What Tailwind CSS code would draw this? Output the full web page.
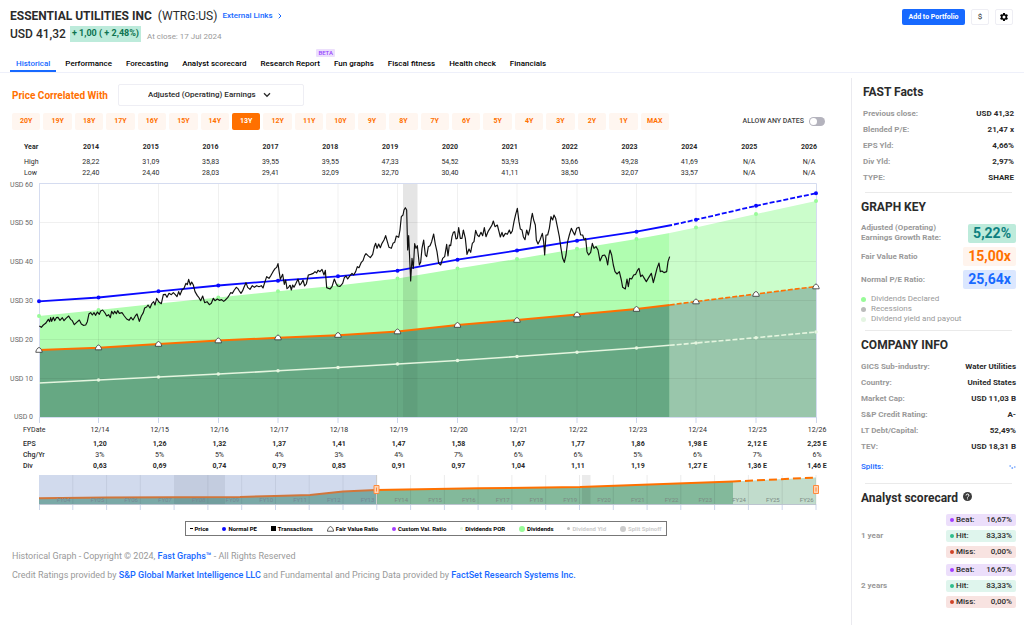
<!DOCTYPE html>
<html lang="en">
<head>
<meta charset="utf-8">
<title>Essential Utilities Inc – Historical Graph</title>
<script src="https://cdn.jsdelivr.net/npm/@tailwindcss/browser@4"></script>
</head>
<body class="bg-white font-[Roboto,sans-serif] text-[#2b2b2b] overflow-x-hidden">
<header class="border-b border-[#eef0fa]">
  <div class="flex items-start justify-between pl-[10px] pr-[11px] pt-[8px]">
    <div>
      <div class="flex h-4 items-center">
        <h1 class="flex items-center gap-[6px] text-[12px] font-bold whitespace-nowrap">ESSENTIAL UTILITIES INC <span class="font-normal">(WTRG:US)</span></h1>
        <a href="#" class="ml-[5px] flex items-center gap-[5px] text-[8px] font-medium text-[#1769ff]">External Links
          <svg class="h-[6px] w-[4px]" viewBox="0 0 4 6" fill="none" stroke="currentColor"><path d="M.7 .7 3 3 .7 5.3"/></svg></a>
      </div>
      <div class="mt-[1px] flex h-[18px] items-center">
        <span class="text-[12px] font-medium">USD 41,32</span>
        <span class="ml-[4px] flex h-4 items-center bg-[#bdebdb] px-[2px] text-[9px] font-bold text-[#0d7350]">+ 1,00 ( + 2,48%)</span>
        <span class="ml-[6px] pt-[6px] text-[8px] text-[#999]">At close: 17 Jul 2024</span>
      </div>
    </div>
    <div class="flex gap-[6px] pt-[1px]">
      <button class="h-4 w-[63px] rounded-[2px] bg-[#1769ff] text-[7px] font-bold text-white">Add to Portfolio</button>
      <button class="h-4 w-[18px] rounded-[2px] border border-[#eeeef4] text-[8px]">$</button>
      <button aria-label="Settings" class="flex h-4 w-[18px] items-center justify-center rounded-[2px] border border-[#eeeef4] text-black">
        <svg class="size-[10px]" viewBox="0 0 24 24" fill="currentColor"><path d="M19.14 12.94c.04-.3.06-.61.06-.94s-.02-.64-.07-.94l2.03-1.58a.49.49 0 0 0 .12-.61l-1.92-3.32a.49.49 0 0 0-.59-.22l-2.39.96a7 7 0 0 0-1.62-.94l-.36-2.54a.48.48 0 0 0-.48-.41h-3.84a.48.48 0 0 0-.47.41l-.36 2.54c-.59.24-1.13.57-1.62.94l-2.39-.96a.48.48 0 0 0-.59.22L2.74 8.87a.48.48 0 0 0 .12.61l2.03 1.58c-.05.3-.09.63-.09.94s.02.64.07.94l-2.03 1.58a.49.49 0 0 0-.12.61l1.92 3.32c.12.22.37.29.59.22l2.39-.96c.5.38 1.03.7 1.62.94l.36 2.54c.05.24.24.41.48.41h3.84c.24 0 .44-.17.47-.41l.36-2.54c.59-.24 1.13-.56 1.62-.94l2.39.96c.22.08.47 0 .59-.22l1.92-3.32a.48.48 0 0 0-.12-.61zM12 15.6A3.6 3.6 0 1 1 12 8.400a3.600 3.600 0 0 1 0 7.200z"/></svg>
      </button>
    </div>
  </div>
  <nav class="mt-[12px] flex h-[17px] gap-[14px] pl-[10px] text-[8px] font-medium text-black">
    <a href="#" class="-mr-[5px] border-b-2 border-[#1769ff] px-[6px] pt-[3px] text-[#1769ff]">Historical</a>
    <a href="#" class="pt-[3px]">Performance</a>
    <a href="#" class="pt-[3px]">Forecasting</a>
    <a href="#" class="pt-[3px]">Analyst scorecard</a>
    <a href="#" class="relative pt-[3px]">Research Report<span class="absolute -top-[6px] -right-[15px] h-[8px] rounded-[1px] bg-[#ecdffc] px-[2px] text-[6px] leading-[8px] text-[#9747ff]">BETA</span></a>
    <a href="#" class="pt-[3px]">Fun graphs</a>
    <a href="#" class="pt-[3px]">Fiscal fitness</a>
    <a href="#" class="pt-[3px]">Health check</a>
    <a href="#" class="pt-[3px]">Financials</a>
  </nav>
</header>

<div class="flex">
<main class="min-w-0 flex-1">
  <div class="flex items-center pl-[12px] pt-[11px]">
    <label for="metric" class="w-[106px] text-[10px] font-bold whitespace-nowrap text-[#ff7000]">Price Correlated With</label>
    <div class="relative flex">
      <select id="metric" class="h-[22px] w-[186px] appearance-none rounded-[2px] border border-[#eeeef4] bg-white pl-[29px] text-[8px] font-medium">
        <option>Adjusted (Operating) Earnings</option>
      </select>
      <svg class="pointer-events-none absolute top-[8px] left-[145px] h-[6px] w-[8px]" viewBox="0 0 8 6" fill="none" stroke="#2b2b2b" stroke-width="1.3"><path d="M1 1.300 4 4.300 7 1.300"/></svg>
    </div>
  </div>
  <div class="mt-[7px] flex items-center justify-between pr-[26px] pl-[12px]">
    <div class="grid w-[657px] grid-cols-[repeat(21,minmax(0,1fr))] gap-[3px] text-[7px] font-bold text-[#ff7000] [&>button]:h-[17px] [&>button]:rounded-[2px] [&>button]:bg-[#fff6f0]">
      <button>20Y</button><button>19Y</button><button>18Y</button><button>17Y</button><button>16Y</button><button>15Y</button><button>14Y</button><button class="bg-[#ff7000]! text-white">13Y</button><button>12Y</button><button>11Y</button><button>10Y</button><button>9Y</button><button>8Y</button><button>7Y</button><button>6Y</button><button>5Y</button><button>4Y</button><button>3Y</button><button>2Y</button><button>1Y</button><button>MAX</button>
    </div>
    <label class="flex items-center gap-[5px] text-[7px] font-medium text-[#444]">ALLOW ANY DATES
      <input type="checkbox" class="h-[9px] w-4 appearance-none rounded-full bg-[#b4b3bd] before:mt-[1px] before:ml-[1px] before:block before:size-[7px] before:rounded-full before:bg-white"></label>
  </div>

  <div class="mt-[12px] pr-[12px] pl-[24px]">
    <table class="w-full table-fixed text-center text-[7px] leading-[11px]">
      <colgroup><col class="w-[37px]"><col span="13"></colgroup>
      <thead><tr class="h-[15px] align-top text-[7px] font-bold"><th class="text-left">Year</th><th>2014</th><th>2015</th><th>2016</th><th>2017</th><th>2018</th><th>2019</th><th>2020</th><th>2021</th><th>2022</th><th>2023</th><th>2024</th><th>2025</th><th>2026</th></tr></thead>
      <tbody>
      <tr><th class="text-left font-normal">High</th><td>28,22</td><td>31,09</td><td>35,83</td><td>39,55</td><td>39,55</td><td>47,33</td><td>54,52</td><td>53,93</td><td>53,66</td><td>49,28</td><td>41,69</td><td>N/A</td><td>N/A</td></tr>
      <tr><th class="text-left font-normal">Low</th><td>22,40</td><td>24,40</td><td>28,03</td><td>29,41</td><td>32,09</td><td>32,70</td><td>30,40</td><td>41,11</td><td>38,50</td><td>32,07</td><td>33,57</td><td>N/A</td><td>N/A</td></tr>
      </tbody>
    </table>
  </div>

  <svg class="w-full" viewBox="0 179 851 244" role="img" aria-label="Price and fair value chart">
    <defs>
      <path id="tri" d="M-3.200 2.300C-3.200 .8-1.600-2.500 0-2.500S3.200 .8 3.200 2.300Z" fill="#fff" stroke="#333" stroke-width=".8"/>
    </defs>
    <path fill="#b0fdb0" d="M39 316 98.500 310 158.500 303.500 218.300 297.500 278 291.300 338 285.500 397.500 278.500 457.500 268.500 517 259 577 248.700 636.500 239 669.700 233V417H39Z"/>
    <path fill="#cbfdcb" d="M669.700 233 696 227.500 756 214 816 201V417H669.700Z"/>
    <rect x="403" y="184" width="14.500" height="233" fill="#000" fill-opacity=".1"/>
    <path fill="#66a883" d="M39 350 98.500 347.800 158.500 344 218.300 340.500 278 337.800 338 335.200 397.500 331.500 457.500 325 517 320 577 314.500 636.500 309 669.700 305V417H39Z"/>
    <path fill="#99c6ab" d="M669.700 305 696 301.500 756 294 816 286.500V417H669.700Z"/>
    <rect x="403" y="331" width="14.500" height="86" fill="#000" fill-opacity=".05"/>
    <g stroke="#000" stroke-opacity=".06"><path d="M39 222.500H816M39 261.500H816M39 300.500H816M39 339.500H816M39 378.500H816M98.500 184V417M158.500 184V417M218.500 184V417M278 184V417M338 184V417M397.500 184V417M457.500 184V417M517 184V417M577 184V417M636.500 184V417M696 184V417M756 184V417"/></g>
    <path d="M39 183.500H816.500V417.500H39.500V183.500" fill="none" stroke="#d5dcf0"/>
    <path d="M39.500 417V423M98.500 417V423M158.500 417V423M218.500 417V423M278 417V423M338 417V423M397.500 417V423M457.500 417V423M517 417V423M577 417V423M636.500 417V423M696 417V423M756 417V423M816.500 417V423" stroke="#ccd6eb"/>
    <g fill="none" stroke-width="1.600">
      <path stroke="#e4f5df" d="M39 383 98.500 380 158.500 377 218.300 374 278 370.800 338 367.500 397.500 364 457.500 360.500 517 356.500 577 352.300 636.500 348 669.700 345.300"/>
      <path stroke="#e4f5df" stroke-dasharray="5 2" d="M669.700 345.300 696 343 756 337.700 816 332"/>
      <path stroke="#ff7000" stroke-width="2" d="M39 350 98.500 347.800 158.500 344 218.300 340.500 278 337.800 338 335.200 397.500 331.500 457.500 325 517 320 577 314.500 636.500 309 669.700 305"/>
      <path stroke="#ff7000" stroke-dasharray="5 2" d="M669.700 305 696 301.500 756 294 816 286.500"/>
      <path stroke="#0a0aff" stroke-width="1.800" d="M39 301.300 98.500 297.500 158.500 291.300 218.300 285.500 278 280.700 338 276.300 397.500 270.700 457.500 259.700 517 250.500 577 240.700 636.500 231.700 672 225"/>
      <path stroke="#0a0aff" stroke-width="1.800" stroke-dasharray="5 2" d="M674 224.500 696 219.700 756 205.800 816 193.300"/>
    </g>
    <g stroke-linecap="round" stroke-width="4">
      <path stroke="#0a0aff" d="M39 301.300h0M98.500 297.500h0M158.500 291.300h0M218.300 285.500h0M278 280.700h0M338 276.300h0M397.500 270.700h0M457.500 259.700h0M517 250.500h0M577 240.700h0M636.500 231.700h0M696 219.700h0M756 205.800h0M816 193.300h0"/>
      <path stroke="#98fb98" d="M39 316h0M98.500 310h0M158.500 303.500h0M218.300 297.500h0M278 291.300h0M338 285.500h0M397.500 278.500h0M457.500 268.500h0M517 259h0M577 248.700h0M636.500 239h0M696 227.500h0M756 214h0M816 201h0"/>
      <path stroke="#e4f5df" stroke-width="3.500" d="M98.500 380h0M158.500 377h0M218.300 374h0M278 370.800h0M338 367.500h0M397.500 364h0M457.500 360.500h0M517 356.500h0M577 352.300h0M636.500 348h0M696 343h0M756 337.700h0M816 332h0"/>
    </g>
    <g fill="none" stroke="#111" stroke-width="3.500" stroke-linejoin="round">
      <path transform="translate(0 135) scale(.33333)" d="M118 573 124 577 130 570 137 565 145 553 149 560 152 548 155 559 160 547 164 557 169 548 174 547 180 556 187 548 192 557 198 550 206 543 212 553 217 557 223 569 230 562 238 555 244 567 250 571 257 570 262 560 267 536 272 533 277 540 282 533 287 541 292 531 298 538 302 528 308 525 315 534 320 543 326 539 331 548 335 529 340 537 344 529 349 536 353 527 358 535 366 533 373 543 380 552 387 556 393 547 399 555 406 543 411 537 418 559 424 543 430 533 434 519 440 516 444 510 450 519 456 505 461 500 465 510 470 490 476 500 484 506 490 479 496 478 501 487 507 475 514 479 520 473 526 479 531 485 536 470 540 480 546 465 552 460 558 445 562 449 566 433 571 450 575 441 580 450 585 470 592 482 597 488 602 497 608 483 614 503 621 500 628 509 634 505 640 490 645 497 652 492 658 496 665 494 671 499 676 495 683 488 688 480 692 473 697 475 703 465 709 457 714 461 718 468 723 475 728 467 732 457 738 443 743 457 750 463 757 452 763 457 770 452 777 455 784 452 789 459 794 443 800 425 807 430 813 421 819 410 825 401 830 397 834 386 837 407 841 433 848 418 853 448 857 435 861 461 866 457 870 450"/>
      <path transform="translate(290 175) scale(.33333)" d="M0 330 4 345 8 330 12 337 18 325 24 312 29 330 34 325 39 315 44 333 49 327 55 300 62 298 70 295 75 290 80 294 84 286 90 290 96 283 102 300 106 286 110 338 120 342 126 335 133 312 138 325 143 333 150 334 158 325 163 308 168 303 173 312 180 302 186 295 191 300 197 290 202 275 207 278 214 262 219 257 224 242 228 236 234 242 241 248 248 238 253 215 257 205 261 220 266 207 271 218 276 205 282 195 287 182 292 200 297 217 304 220 309 205 314 202 319 183 326 187 330 165 334 125 339 120 342 105 346 98 350 105 353 225 356 182 362 318 366 250 370 280 374 206 378 220 382 212 388 270 392 262 396 220 401 195 406 240 410 245 415 215 420 212 425 200 431 177 436 208 441 230 446 265 452 270 458 250 464 245 470 208 474 243 478 210 482 212 486 185 490 172 494 170 498 192 502 190 506 158 511 190 516 190 520 165 526 190 531 238 537 222 542 232 547 205 552 200 557 166 562 180 567 185 573 172 578 182 583 158 588 185 594 170 600 160 606 150"/>
      <path transform="translate(480 175) scale(.33333)" d="M36 150 40 138 45 155 52 150 57 170 61 186 66 172 70 185 76 175 82 178 88 165 92 176 97 168 102 140 107 118 112 100 117 140 121 162 126 165 130 185 135 194 140 165 145 180 150 160 154 130 157 115 161 135 166 150 169 195 174 207 180 195 187 175 191 200 194 240 198 180 203 180 208 160 213 125 218 135 222 120 227 130 232 155 238 185 243 220 248 250 253 262 258 240 263 200 268 180 274 160 279 170 284 180 290 160 297 157 302 180 308 180 313 195 317 190 321 230 326 240 332 232 337 205 342 220 348 215 354 225 360 258 367 242 374 240 379 250 383 270 387 240 390 225 395 240 400 270 405 290 411 297 418 290 424 315 428 337 436 342 441 312 445 335 449 310 455 312 461 300 467 298 473 285 477 280 482 305 487 300 493 310 499 320 506 308 514 295 520 323 526 300 531 280 537 264 541 290 546 288 552 293 560 290 564 260 569 245"/>
    </g>
    <g><use href="#tri" x="39" y="350"/><use href="#tri" x="98.500" y="347.500"/><use href="#tri" x="158.500" y="344"/><use href="#tri" x="218.300" y="340.500"/><use href="#tri" x="278" y="337.500"/><use href="#tri" x="338" y="335"/><use href="#tri" x="397.500" y="331.500"/><use href="#tri" x="457.500" y="325"/><use href="#tri" x="517" y="320"/><use href="#tri" x="577" y="314.500"/><use href="#tri" x="636.500" y="309"/><use href="#tri" x="696" y="301.500"/><use href="#tri" x="756" y="294"/><use href="#tri" x="816" y="286.500"/></g>
    <g font-size="7" fill="#666" text-anchor="end"><text x="33" y="187">USD 60</text><text x="33" y="225">USD 50</text><text x="33" y="264">USD 40</text><text x="33" y="303">USD 30</text><text x="33" y="342">USD 20</text><text x="33" y="381">USD 10</text><text x="33" y="419">USD 0</text></g>
  </svg>

  <div class="mt-[2px] pr-[4px] pl-[23px]">
    <table class="w-full table-fixed text-center text-[7px] leading-[11px]">
      <colgroup><col class="w-[47px]"><col span="13"></colgroup>
      <tbody>
      <tr class="h-[14px] align-top"><th class="text-left font-normal">FYDate</th><td>12/14</td><td>12/15</td><td>12/16</td><td>12/17</td><td>12/18</td><td>12/19</td><td>12/20</td><td>12/21</td><td>12/22</td><td>12/23</td><td>12/24</td><td>12/25</td><td>12/26</td></tr>
      <tr class="font-bold"><th class="text-left font-medium">EPS</th><td>1,20</td><td>1,26</td><td>1,32</td><td>1,37</td><td>1,41</td><td>1,47</td><td>1,58</td><td>1,67</td><td>1,77</td><td>1,86</td><td>1,98 E</td><td>2,12 E</td><td>2,25 E</td></tr>
      <tr><th class="text-left font-medium">Chg/Yr</th><td>3%</td><td>5%</td><td>5%</td><td>4%</td><td>3%</td><td>4%</td><td>7%</td><td>6%</td><td>6%</td><td>5%</td><td>6%</td><td>7%</td><td>6%</td></tr>
      <tr class="font-bold"><th class="text-left font-medium">Div</th><td>0,63</td><td>0,69</td><td>0,74</td><td>0,79</td><td>0,85</td><td>0,91</td><td>0,97</td><td>1,04</td><td>1,11</td><td>1,19</td><td>1,27 E</td><td>1,36 E</td><td>1,46 E</td></tr>
      </tbody>
    </table>
  </div>

  <svg class="mt-[1px] w-full" viewBox="0 473 851 38" role="img" aria-label="Date range navigator">
    <path fill="#83b99b" d="M39 498.300 106 497.500 240 497 275 496 310 495 343 491.500 376 490 478 488.300 580 487 733 481.500V504H39Z"/>
    <path fill="#c1dccc" d="M733 481.500 816 477.500V504H733Z"/>
    <path stroke="#000" stroke-opacity=".08" d="M72.800 475V504M106.600 475V504M140.300 475V504M207.900 475V504M241.700 475V504M275.500 475V504M309.200 475V504M343 475V504M376.800 475V504M410.600 475V504M444.400 475V504M478.100 475V504M511.900 475V504M545.700 475V504M579.500 475V504M613.300 475V504M647.100 475V504M680.800 475V504M714.600 475V504M748.400 475V504M782.200 475V504M816 475V504"/>
    <path fill="#000" fill-opacity=".08" d="M174 475h51v29h-51zM582 475h8.500v29h-8.500z"/>
    <path stroke="#ccd6eb" d="M39.500 504V510M72.800 504V510M106.600 504V510M140.300 504V510M174.100 504V510M207.900 504V510M241.700 504V510M275.500 504V510M309.200 504V510M343 504V510M376.800 504V510M410.600 504V510M444.400 504V510M478.100 504V510M511.900 504V510M545.700 504V510M579.500 504V510M613.300 504V510M647.100 504V510M680.800 504V510M714.600 504V510M748.400 504V510M782.200 504V510M816 504V510"/>
    <path d="M39 504.500H816" stroke="#bcc4cf"/>
    <g fill="none" stroke="#ff7000" stroke-width="2"><path d="M39 498.300 106 497.500 240 497 275 496 310 495 343 491.500 376 490 478 488.300 580 487 733 481.500"/><path stroke-dasharray="8 4" d="M733 481.500 816 477.500"/></g>
    <g font-size="6" fill="#7b8a83" text-anchor="middle"><text x="63.500" y="502">FY04</text><text x="97.300" y="502">FY05</text><text x="131.100" y="502">FY06</text><text x="164.900" y="502">FY07</text><text x="198.600" y="502">FY08</text><text x="232.400" y="502">FY09</text><text x="266.200" y="502">FY10</text><text x="300" y="502">FY11</text><text x="333.800" y="502">FY12</text><text x="367.500" y="502">FY13</text><text x="401.300" y="502">FY14</text><text x="435.100" y="502">FY15</text><text x="468.900" y="502">FY16</text><text x="502.700" y="502">FY17</text><text x="536.400" y="502">FY18</text><text x="570.200" y="502">FY19</text><text x="604" y="502">FY20</text><text x="637.800" y="502">FY21</text><text x="671.600" y="502">FY22</text><text x="705.300" y="502">FY23</text><text x="739.100" y="502">FY24</text><text x="772.900" y="502">FY25</text><text x="806.700" y="502">FY26</text></g>
    <rect x="39" y="475" width="337.500" height="29" fill="#6685c2" fill-opacity=".3"/>
    <path d="M376.500 475V504" stroke="#ccc"/>
    <g fill="#ffd5b5" stroke="#ff8a3c"><path d="M374 485.500h5v8h-5zM813.500 485.500h5v8h-5z"/><path fill="none" d="M376.500 487.500v4M816 487.500v4"/></g>
  </svg>

  <ul class="mx-auto mt-[10px] flex h-[15px] w-[482px] items-center justify-between border border-[#777] px-[4px] text-[6px] font-bold whitespace-nowrap text-black [&>li]:flex [&>li]:items-center [&>li]:gap-[2px]">
    <li><i class="h-px w-[3px] bg-black"></i>Price</li>
    <li><i class="size-[4px] rounded-full bg-[#0a0aff]"></i>Normal PE</li>
    <li><i class="size-[5px] bg-black"></i>Transactions</li>
    <li><svg class="h-[6px] w-[7px]" viewBox="-3.600 -3 7.200 6"><use href="#tri"/></svg>Fair Value Ratio</li>
    <li><i class="size-[4px] rounded-full bg-[#a33cff]"></i>Custom Val. Ratio</li>
    <li><i class="size-[3px] rounded-full bg-[#e0f3dc]"></i>Dividends POR</li>
    <li><i class="size-[6px] rounded-full bg-[#98fb98]"></i>Dividends</li>
    <li class="text-[#ccc]"><i class="size-[3px] rounded-full bg-[#bbb]"></i>Dividend Yld</li>
    <li class="text-[#ccc]"><i class="size-[6px] rounded-full bg-[#ccc]"></i>Split Spinoff</li>
  </ul>

  <footer class="pt-[14px] pl-[12px] text-[9px] leading-[12px] text-[#999] [&_a]:font-medium [&_a]:text-[#1769ff]">
    <p>Historical Graph - Copyright © 2024, <a href="#">Fast Graphs™</a> - All Rights Reserved</p>
    <p class="mt-[7px]">Credit Ratings provided by <a href="#">S&amp;P Global Market Intelligence LLC</a> and Fundamental and Pricing Data provided by <a href="#">FactSet Research Systems Inc.</a></p>
  </footer>
</main>

<aside class="mt-[5px] min-h-[547px] w-[173px] shrink-0 border-l border-[#eaeaef] pr-[8px] pl-[9px] text-[8px]">
  <section class="pr-[2px] pl-[2px]">
    <h2 class="pt-[6px] text-[12px] leading-[16px] font-bold">FAST Facts</h2>
    <dl class="mt-[6px] font-bold [&_dt]:text-[#999] [&>div]:flex [&>div]:h-4 [&>div]:items-center [&>div]:justify-between">
      <div><dt>Previous close:</dt><dd>USD 41,32</dd></div>
      <div><dt>Blended P/E:</dt><dd>21,47 x</dd></div>
      <div><dt>EPS Yld:</dt><dd>4,66%</dd></div>
      <div><dt>Div Yld:</dt><dd>2,97%</dd></div>
      <div><dt>TYPE:</dt><dd>SHARE</dd></div>
    </dl>
  </section>
  <hr class="mx-[4px] mt-[6px] border-[#eaeaea]">
  <section>
    <h2 class="mt-[6px] text-[12px] leading-[16px] font-bold">GRAPH KEY</h2>
    <dl class="mt-[8px] flex flex-col gap-[4px] font-bold [&_dd]:flex [&_dd]:h-[19px] [&_dd]:items-center [&_dd]:rounded-[2px] [&_dd]:px-[5px] [&_dd]:text-[14px] [&_dt]:text-[#999] [&>div]:flex [&>div]:items-center [&>div]:justify-between">
      <div><dt class="leading-[10px]">Adjusted (Operating)<br>Earnings Growth Rate:</dt><dd class="bg-[#bdebdb] text-[#0d8080]">5,22%</dd></div>
      <div><dt>Fair Value Ratio</dt><dd class="bg-[#fff4ed] text-[#ff7000]">15,00x</dd></div>
      <div><dt>Normal P/E Ratio:</dt><dd class="bg-[#dbe7ff] text-[#1769ff]">25,64x</dd></div>
    </dl>
    <ul class="mt-[5px] leading-[10px] text-[#999] [&_i]:size-[5px] [&_i]:rounded-full [&>li]:flex [&>li]:items-center [&>li]:gap-[5px]">
      <li><i class="bg-[#98fb98]"></i>Dividends Declared</li>
      <li><i class="bg-[#bbb]"></i>Recessions</li>
      <li><i class="bg-[#e4f5e2]"></i>Dividend yield and payout</li>
    </ul>
  </section>
  <hr class="mx-[4px] mt-[6px] border-[#eaeaea]">
  <section>
    <h2 class="mt-[6px] text-[12px] leading-[16px] font-bold">COMPANY INFO</h2>
    <dl class="mt-[6px] font-bold [&_dt]:text-[#999] [&>div]:flex [&>div]:h-4 [&>div]:items-center [&>div]:justify-between">
      <div><dt>GICS Sub-industry:</dt><dd>Water Utilities</dd></div>
      <div><dt>Country:</dt><dd>United States</dd></div>
      <div><dt>Market Cap:</dt><dd>USD 11,03 B</dd></div>
      <div><dt>S&amp;P Credit Rating:</dt><dd>A-</dd></div>
      <div><dt>LT Debt/Capital:</dt><dd>52,49%</dd></div>
      <div><dt>TEV:</dt><dd>USD 18,31 B</dd></div>
    </dl>
    <a href="#" class="mt-[6px] flex items-center justify-between font-medium text-[#1769ff]">Splits:
      <svg class="h-[4px] w-[8px]" viewBox="0 0 8 4" fill="currentColor"><path d="M1.500 .5h1.300v1h-1.300zM3.500 2.500h1.600v1h-1.600zM6.200 1.500h1.200v1h-1.200z"/></svg></a>
  </section>
  <hr class="mx-[4px] mt-[10px] border-[#eaeaea]">
  <section>
    <h2 class="mt-[6px] flex items-center gap-[5px] text-[12px] leading-[16px] font-bold">Analyst scorecard
      <svg class="mb-[4px] size-[9px]" viewBox="0 0 10 10"><circle cx="5" cy="5" r="5" fill="#3c3c3c"/><path d="M3.400 3.900a1.600 1.500 0 1 1 2.300 1.200Q5 5.500 5 6.200M5 7.200v1" fill="none" stroke="#fff" stroke-width="1.100"/></svg></h2>
    <div class="mt-[8px] flex flex-col gap-[6px] [&_dl]:flex [&_dl]:w-[70px] [&_dl]:flex-col [&_dl]:gap-[4px] [&_dl]:font-medium [&_dl>div]:flex [&_dl>div]:h-[12px] [&_dl>div]:items-center [&_dl>div]:rounded-[2px] [&_dl>div]:px-[4px] [&_dt]:flex-1 [&_h3]:font-bold [&_h3]:text-[#999] [&_i]:mr-[2px] [&_i]:size-[4px] [&_i]:rounded-full [&>div]:flex [&>div]:items-center [&>div]:justify-between">
      <div><h3>1 year</h3><dl>
        <div class="bg-[#ecdffb]"><i class="bg-[#a33cff]"></i><dt>Beat:</dt><dd>16,67%</dd></div>
        <div class="bg-[#dff5ed]"><i class="bg-[#2fbd8b]"></i><dt>Hit:</dt><dd>83,33%</dd></div>
        <div class="bg-[#f8e3e1]"><i class="bg-[#cf4327]"></i><dt>Miss:</dt><dd>0,00%</dd></div></dl></div>
      <div><h3>2 years</h3><dl>
        <div class="bg-[#ecdffb]"><i class="bg-[#a33cff]"></i><dt>Beat:</dt><dd>16,67%</dd></div>
        <div class="bg-[#dff5ed]"><i class="bg-[#2fbd8b]"></i><dt>Hit:</dt><dd>83,33%</dd></div>
        <div class="bg-[#f8e3e1]"><i class="bg-[#cf4327]"></i><dt>Miss:</dt><dd>0,00%</dd></div></dl></div>
    </div>
  </section>
</aside>
</div>
</body>
</html>
